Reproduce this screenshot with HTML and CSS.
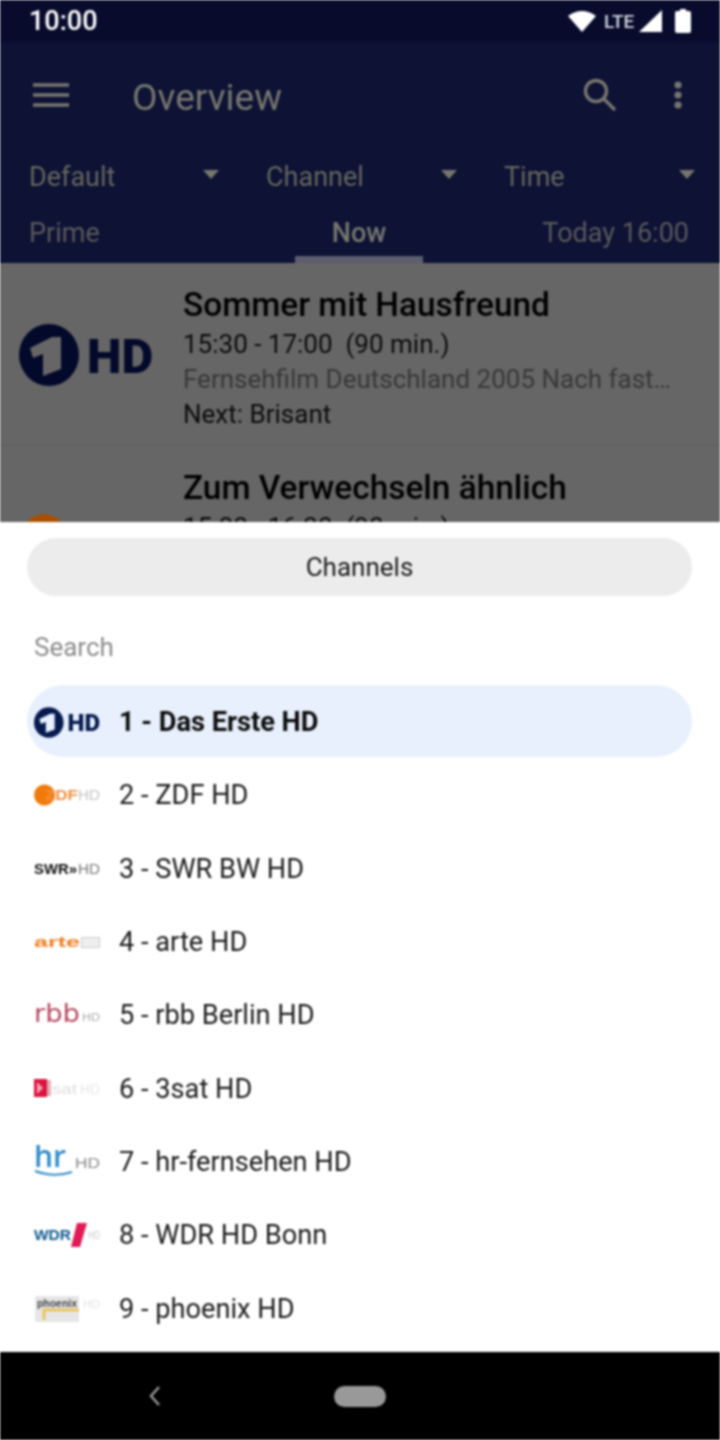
FILE: index.html

```html
<!DOCTYPE html>
<html lang="en">
<head>
  <meta charset="UTF-8" />
  <meta name="viewport" content="width=device-width, initial-scale=1.0" />
  <title>Overview</title>
  <link rel="stylesheet" href="styles.css">
</head>
<body>
  <div class="top">
    <div class="status">
      <span class="clock">10:00</span>
      <div class="status-icons">
        <svg width="28" height="22" viewBox="0 0 28 22"><path d="M0 6 Q14 -4 28 6 L14 22 Z" fill="#fff"/></svg>
        <span class="lte">LTE</span>
        <svg width="24" height="24" viewBox="0 0 24 24"><path d="M23 1 V23 H0 Z" fill="#fff"/></svg>
        <svg class="battery" width="16" height="24" viewBox="0 0 16 24"><path d="M5 0 H11 V2 H14 Q16 2 16 4 V22 Q16 24 14 24 H2 Q0 24 0 22 V4 Q0 2 2 2 H5 Z" fill="#fff"/></svg>
      </div>
    </div>

    <div class="toolbar">
      <svg class="menu" width="36" height="24" viewBox="0 0 36 24"><path d="M0 2 H36 M0 12 H36 M0 22 H36" stroke="#77776f" stroke-width="3.6"/></svg>
      <span class="title">Overview</span>
      <svg class="search" width="34" height="34" viewBox="0 0 34 34" fill="none" stroke="#77776f" stroke-width="3.4"><circle cx="13" cy="13" r="10.5"/><path d="M20.5 20.5 L32 32"/></svg>
      <svg class="more" width="8" height="28" viewBox="0 0 8 28" fill="#77776f"><circle cx="4" cy="4" r="3.6"/><circle cx="4" cy="14" r="3.6"/><circle cx="4" cy="24" r="3.6"/></svg>
    </div>

    <div class="filters">
      <div class="filter"><span>Default</span><i class="arrow"></i></div>
      <div class="filter"><span>Channel</span><i class="arrow"></i></div>
      <div class="filter"><span>Time</span><i class="arrow"></i></div>
    </div>

    <div class="tabs">
      <span class="tab">Prime</span>
      <span class="tab tab-now">Now</span>
      <span class="tab">Today 16:00</span>
    </div>

    <div class="programs">
      <div class="program">
        <div class="program-logo">
          <svg width="134" height="62" viewBox="0 0 134 62">
            <ellipse cx="30" cy="31" rx="30" ry="31" fill="currentColor"/>
            <path class="logo-cut" d="M11 24 L33 13 L42 13 L42 45 L24 52 L24 30 L14 34 Z"/>
            <text x="68" y="49" class="logo-hd" fill="currentColor">HD</text>
          </svg>
        </div>
        <div class="program-text">
          <div class="program-title">Sommer mit Hausfreund</div>
          <div class="program-line">15:30 - 17:00&nbsp; (90 min.)</div>
          <div class="program-line program-desc">Fernsehfilm Deutschland 2005 Nach fast…</div>
          <div class="program-line">Next: Brisant</div>
        </div>
      </div>
      <div class="program">
        <div class="program-logo"><div class="zdf-dot"></div></div>
        <div class="program-text">
          <div class="program-title">Zum Verwechseln ähnlich</div>
          <div class="program-line">15:00 - 16:30&nbsp; (90 min.)</div>
        </div>
      </div>
    </div>
  </div>

  <div class="sheet">
    <div class="sheet-button">Channels</div>
    <div class="sheet-search">Search</div>
    <div class="channels">
      <div class="channel active">
        <svg class="channel-logo" width="66" height="31" viewBox="0 0 134 62">
          <ellipse cx="30" cy="31" rx="30" ry="31" fill="currentColor"/>
          <path class="logo-cut" d="M11 24 L33 13 L42 13 L42 45 L24 52 L24 30 L14 34 Z"/>
          <text x="68" y="49" class="logo-hd" fill="currentColor">HD</text>
        </svg>
        <span>1 - Das Erste HD</span>
      </div>
      <div class="channel">
        <svg class="channel-logo" width="66" height="28" viewBox="0 0 66 28">
          <circle cx="10.5" cy="14" r="10.5" fill="#f07b0a"/>
          <text x="11" y="19" class="tiny-bold" fill="#f09040" textLength="33" lengthAdjust="spacingAndGlyphs">ZDF</text>
          <text x="44" y="19" class="tiny" fill="#c4c4c4" textLength="22" lengthAdjust="spacingAndGlyphs">HD</text>
        </svg>
        <span>2 - ZDF HD</span>
      </div>
      <div class="channel">
        <svg class="channel-logo" width="66" height="28" viewBox="0 0 66 28">
          <text x="0" y="19" class="tiny-bold" fill="#111" textLength="43" lengthAdjust="spacingAndGlyphs">SWR»</text>
          <text x="44" y="19" class="tiny" fill="#777" textLength="22" lengthAdjust="spacingAndGlyphs">HD</text>
        </svg>
        <span>3 - SWR BW HD</span>
      </div>
      <div class="channel">
        <svg class="channel-logo" width="66" height="28" viewBox="0 0 66 28">
          <text x="0" y="19" class="tiny-bold" fill="#f07f22" textLength="46" lengthAdjust="spacingAndGlyphs">arte</text>
          <rect x="47.5" y="9.5" width="18" height="10" fill="#eee" stroke="#ccc"/>
        </svg>
        <span>4 - arte HD</span>
      </div>
      <div class="channel">
        <svg class="channel-logo" width="66" height="28" viewBox="0 0 66 28">
          <text x="0" y="21" class="rbb-text" fill="#b5485f" textLength="46" lengthAdjust="spacingAndGlyphs">rbb</text>
          <text x="48" y="20" class="tiny-small" fill="#aaa" textLength="18" lengthAdjust="spacingAndGlyphs">HD</text>
        </svg>
        <span>5 - rbb Berlin HD</span>
      </div>
      <div class="channel">
        <svg class="channel-logo" width="66" height="28" viewBox="0 0 66 28">
          <rect x="0" y="4" width="13" height="18" fill="#dc1440"/>
          <path d="M3 7 L9 13 L3 19 Z" fill="#f3a5b5"/>
          <rect x="13" y="5" width="4" height="16" fill="#e8aab8"/>
          <text x="18" y="19" class="tiny" fill="#ddd" textLength="25" lengthAdjust="spacingAndGlyphs">sat</text>
          <text x="46" y="19" class="tiny" fill="#e8e8e8" textLength="20" lengthAdjust="spacingAndGlyphs">HD</text>
        </svg>
        <span>6 - 3sat HD</span>
      </div>
      <div class="channel">
        <svg class="channel-logo" width="66" height="34" viewBox="0 0 66 34">
          <text x="0" y="22" class="hr-text" fill="#2d8cca">hr</text>
          <path d="M1 26 Q20 33 38 27" stroke="#2d8cca" stroke-width="2" fill="none"/>
          <text x="41" y="23" class="tiny" fill="#888" textLength="25" lengthAdjust="spacingAndGlyphs">HD</text>
        </svg>
        <span>7 - hr-fernsehen HD</span>
      </div>
      <div class="channel">
        <svg class="channel-logo" width="66" height="28" viewBox="0 0 66 28">
          <text x="0" y="19" class="tiny-bold" fill="#0e5a90" textLength="37" lengthAdjust="spacingAndGlyphs">WDR</text>
          <path d="M43 2 H53 L46 26 H37 Z" fill="#e01a55"/>
          <text x="54" y="18" class="tiny-small" fill="#ccc" textLength="12" lengthAdjust="spacingAndGlyphs">HD</text>
        </svg>
        <span>8 - WDR HD Bonn</span>
      </div>
      <div class="channel">
        <svg class="channel-logo" width="66" height="28" viewBox="0 0 66 28">
          <rect x="1" y="1" width="44" height="26" fill="#e6e6e6"/>
          <text x="3" y="12" class="tiny-small" font-weight="700" fill="#444" textLength="40" lengthAdjust="spacingAndGlyphs">phoenix</text>
          <path d="M45 15 H10 V25" stroke="#eec04a" stroke-width="2.5" fill="none"/>
          <text x="49" y="13" class="tiny-small" fill="#e4e4e4" textLength="17" lengthAdjust="spacingAndGlyphs">HD</text>
        </svg>
        <span>9 - phoenix HD</span>
      </div>
    </div>
  </div>

  <div class="nav">
    <svg width="12" height="20" viewBox="0 0 12 20" class="nav-back" fill="none" stroke="#999" stroke-width="2.4"><path d="M10 1 L2 10 L10 19"/></svg>
    <div class="nav-home"></div>
  </div>
</body>
</html>
```

FILE: styles.css

```css
* {
  box-sizing: border-box;
}
html, body {
  margin: 0;
  height: 1440px;
  overflow: hidden;
}
body {
  display: flex;
  flex-direction: column;
  font-family: Roboto, "Liberation Sans", sans-serif;
  background-color: #fff;
  filter: blur(0.8px);
}

/* dimmed page behind the sheet */
.top {
  height: 522px;
  overflow: hidden;
  flex: none;
  background-color: #666;
}
.status {
  height: 42px;
  background-color: #090b2c;
  display: flex;
  justify-content: space-between;
  align-items: center;
  padding: 0 29px;
}
.clock {
  color: #fff;
  font-size: 27px;
  font-weight: 500;
}
.status-icons {
  display: flex;
  align-items: center;
  gap: 6px;
}
.lte {
  color: #d4d5e0;
  font-size: 19px;
  font-weight: 500;
  width: 29px;
  margin-left: 2px;
  white-space: nowrap;
}
.battery {
  margin-left: 6px;
}
.toolbar {
  height: 109px;
  background-color: #0e1234;
  display: flex;
  align-items: center;
  padding: 0 38px 4px 33px;
}
.title {
  color: #77776f;
  font-size: 37px;
  margin: 6px 0 0 63px;
  flex: 1;
}
.search {
  margin-right: 57px;
}
.filters {
  height: 50px;
  background-color: #0e1234;
  display: grid;
  grid-template-columns: 237px 238px 1fr;
  padding: 2px 24px 0 29px;
}
.filter {
  display: flex;
  align-items: center;
  justify-content: space-between;
  color: #66665f;
  font-size: 27px;
  padding-right: 47px;
}
.filter:last-child {
  padding-right: 1px;
}
.arrow {
  width: 0;
  height: 0;
  border-left: 8px solid transparent;
  border-right: 8px solid transparent;
  border-top: 9px solid #77776f;
  margin-top: -6px;
}
.tabs {
  height: 62px;
  background-color: #0e1234;
  display: grid;
  grid-template-columns: 1fr 128px 1fr;
  padding: 0 31px 0 29px;
}
.tab {
  color: #5a5a5c;
  font-size: 27px;
  padding-top: 16px;
  white-space: nowrap;
}
.tab:last-child {
  text-align: right;
}
.tab-now {
  color: #77776f;
  font-weight: 500;
  text-align: center;
  height: 62px;
  border-bottom: 7px solid #5c5e70;
}
.programs {
  background-color: #666;
}
.program {
  height: 183px;
  display: flex;
  align-items: flex-start;
  padding: 22px 0 0 19px;
  border-bottom: 1px solid #5d5d5d;
}
.program-logo {
  flex: none;
  color: #03092a;
  --cut: #666;
  width: 134px;
  margin-top: 39px;
}
.program-logo svg {
  display: block;
}
.program-text {
  margin-left: 30px;
}
.program-title {
  color: #000;
  font-size: 33.4px;
  font-weight: 500;
  line-height: 40px;
  margin-bottom: 2px;
  white-space: nowrap;
}
.program-line {
  color: #0c0c0c;
  font-size: 26px;
  line-height: 35px;
  white-space: nowrap;
}
.program-desc {
  color: #383838;
}
.zdf-dot {
  width: 44px;
  height: 44px;
  border-radius: 50%;
  background-color: #a85000;
  margin: 7px 0 0 3px;
}
.logo-cut {
  fill: var(--cut, #fff);
}
.logo-hd {
  font-family: Roboto, sans-serif;
  font-weight: 900;
  font-size: 49px;
}

/* channel sheet */
.sheet {
  flex: 1;
  background-color: #fff;
  padding: 16px 28px 0 27px;
  overflow: hidden;
}
.sheet-button {
  height: 58px;
  border-radius: 29px;
  background-color: #ececec;
  color: #1c1c1c;
  font-size: 26px;
  display: flex;
  align-items: center;
  justify-content: center;
}
.sheet-search {
  height: 89px;
  color: #8c8c8c;
  font-size: 26px;
  padding: 36px 0 0 7px;
}
.channels {
  display: flex;
  flex-direction: column;
  gap: 1.35px;
}
.channel {
  height: 72px;
  display: flex;
  align-items: center;
  border-radius: 36px;
  padding: 2px 0 0 7px;
  gap: 19px;
  color: #1c1c1c;
  font-size: 27.2px;
  white-space: nowrap;
}
.channel-logo {
  flex: none;
}
.channel.active {
  background-color: #e8f0fd;
  color: #0c0c0c;
  font-weight: 700;
  --cut: #e8f0fd;
}
.channel.active .channel-logo {
  color: #061a50;
}
.tiny {
  font-family: "Liberation Sans", sans-serif;
  font-size: 15px;
}
.tiny-bold {
  font-family: "Liberation Sans", sans-serif;
  font-size: 15.5px;
  font-weight: 700;
}
.tiny-small {
  font-family: "Liberation Sans", sans-serif;
  font-size: 10px;
}
.rbb-text {
  font-family: "DejaVu Sans", sans-serif;
  font-size: 24px;
}
.hr-text {
  font-family: "Open Sans", sans-serif;
  font-size: 30px;
  font-weight: 600;
}

/* android nav bar */
.nav {
  height: 88px;
  flex: none;
  background-color: #000;
  display: flex;
  align-items: center;
  padding-left: 149px;
}
.nav-back {
  flex: none;
}
.nav-home {
  width: 52px;
  height: 21px;
  border-radius: 11px;
  background-color: #999;
  margin-left: 173px;
}
```
